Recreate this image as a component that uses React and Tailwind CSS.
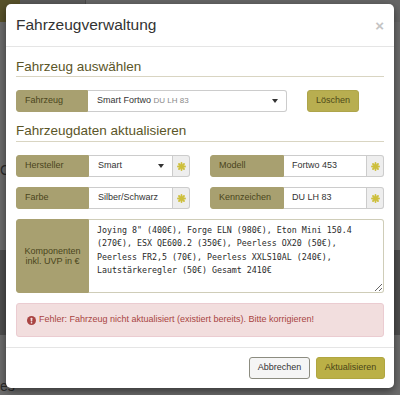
import React from "react";

const Star = () => (
  <svg width="9" height="9" viewBox="0 0 9 9">
    <g stroke="#cdbf3c" strokeWidth="1.8" strokeLinecap="round">
      <line x1="4.5" y1="1" x2="4.5" y2="8" />
      <line x1="1" y1="4.5" x2="8" y2="4.5" />
      <line x1="2" y1="2" x2="7" y2="7" />
      <line x1="7" y1="2" x2="2" y2="7" />
    </g>
  </svg>
);

const Caret = () => (
  <svg width="6" height="4" viewBox="0 0 6 4">
    <path d="M0 0h6L3 4z" fill="#333" />
  </svg>
);

const Field = ({ label, labelW, children }) => (
  <div className="flex h-[22px] flex-1">
    <div className={`${labelW} flex items-center rounded-l-[3px] border border-[#a8a070] bg-[#a8a070] pl-[8px] text-[#4a451c]`}>
      {label}
    </div>
    {children}
    <div className="flex w-[17px] items-center justify-center rounded-r-[3px] border border-l-0 border-[#cccccc] bg-[#eeeeee]">
      <Star />
    </div>
  </div>
);

export default function App() {
  return (
    <div className="relative h-[395px] w-[400px] overflow-hidden bg-[#6c6c6c] font-['Liberation_Sans',Arial,sans-serif]">
      {/* dimmed page behind */}
      <div className="flex h-[22px]">
        <div className="w-[20px] bg-[#58522a]" />
        <div className="flex w-[65px] items-center gap-[3px] bg-[#5a5a5a] pl-[4px] text-[9px] leading-[12px] text-[#2e2e2e]">
          <span>●</span>
          <span>Benutzer</span>
        </div>
        <div className="flex-1 border-l border-[#4a4a4a] bg-[#666666]" />
      </div>
      <div className="h-[140px]" />
      <div className="text-[14px] leading-[16px] text-[#2a2a2a]">C</div>
      <div className="h-[72px]" />
      <div className="h-[85px] bg-[#4e4e4e]" />
      <div className="h-[44px]" />
      <div className="text-[14px] leading-[14px] text-[#2a2a2a]">es</div>

      {/* modal */}
      <div className="absolute left-[6px] top-[4px] w-[388px] rounded-[5px] bg-white shadow-[0_3px_9px_rgba(0,0,0,0.5)]">
        <div className="flex h-[43px] items-center justify-between border-b border-[#e5e5e5] pl-[10px] pr-[10px]">
          <div className="text-[15.5px] leading-[18px] text-[#333333]">Fahrzeugverwaltung</div>
          <div className="text-[15px] font-bold leading-[15px] text-[#c4c4c4]">×</div>
        </div>

        <div className="px-[10px] pb-[10px] text-[9px]">
          <div className="mt-[11px] h-[19px] border-b border-[#d9d5c2] text-[13.5px] leading-[18px] text-[#5b5628]">
            Fahrzeug auswählen
          </div>

          <div className="mt-[13px] flex h-[22px] items-center">
            <div className="flex h-[22px] w-[271px]">
              <div className="flex w-[72px] items-center rounded-l-[3px] border border-[#a8a070] bg-[#a8a070] pl-[8px] text-[#4a451c]">
                Fahrzeug
              </div>
              <div className="flex flex-1 items-center justify-between rounded-r-[3px] border border-l-0 border-[#cccccc] bg-white pl-[9px] pr-[8px] text-[#333333]">
                <span>
                  Smart Fortwo <span className="text-[8px] text-[#8a8a8a]">DU LH 83</span>
                </span>
                <Caret />
              </div>
            </div>
            <div className="ml-[20px] flex h-[22px] w-[52px] items-center justify-center rounded-[3px] border border-[#aea54a] bg-[#b8ae50] text-[#4e4919]">
              Löschen
            </div>
          </div>

          <div className="mt-[10px] h-[20px] border-b border-[#d9d5c2] text-[13.5px] leading-[18px] text-[#5b5628]">
            Fahrzeugdaten aktualisieren
          </div>

          <div className="mt-[13px] flex gap-[20px]">
            <Field label="Hersteller" labelW="w-[73px]">
              <div className="flex flex-1 items-center justify-between border border-l-0 border-[#cccccc] bg-white pl-[9px] pr-[8px] text-[#333333]">
                <span>Smart</span>
                <Caret />
              </div>
            </Field>
            <Field label="Modell" labelW="w-[74px]">
              <div className="flex flex-1 items-center border border-l-0 border-[#cccccc] bg-white pl-[8px] text-[#333333]">
                Fortwo 453
              </div>
            </Field>
          </div>

          <div className="mt-[10px] flex gap-[20px]">
            <Field label="Farbe" labelW="w-[73px]">
              <div className="flex flex-1 items-center border border-l-0 border-[#cccccc] bg-white pl-[9px] text-[#333333]">
                Silber/Schwarz
              </div>
            </Field>
            <Field label="Kennzeichen" labelW="w-[74px]">
              <div className="flex flex-1 items-center border border-l-0 border-[#cccccc] bg-white pl-[8px] text-[#333333]">
                DU LH 83
              </div>
            </Field>
          </div>

          <div className="mt-[10px] flex h-[74px]">
            <div className="flex w-[73px] items-center justify-center rounded-l-[3px] border border-[#a8a070] bg-[#a8a070] text-center leading-[10px] text-[#4a451c]">
              Komponenten
              <br />
              inkl. UVP in €
            </div>
            <textarea
              readOnly
              className="flex-1 resize-y rounded-r-[3px] border border-l-0 border-[#cfcdb8] bg-white py-[4px] pl-[8px] pr-[12px] font-['DejaVu_Sans_Mono',monospace] text-[8.3px] leading-[13.4px] text-[#2a2a2a] outline-none"
              value={'Joying 8" (400€), Forge ELN (980€), Eton Mini 150.4 (270€), ESX QE600.2 (350€), Peerless OX20 (50€), Peerless FR2,5 (70€), Peerless XXLS10AL (240€), Lautstärkeregler (50€) Gesamt 2410€'}
            />
          </div>

          <div className="mt-[10px] flex h-[34px] items-center gap-[3px] rounded-[3px] border border-[#ebccd1] bg-[#f2dede] pl-[10px] text-[#a94442]">
            <svg width="9" height="9" viewBox="0 0 10 10">
              <circle cx="5" cy="5" r="5" fill="#a94442" />
              <rect x="4.1" y="2" width="1.8" height="4" rx="0.5" fill="#f2dede" />
              <rect x="4.1" y="6.8" width="1.8" height="1.6" rx="0.5" fill="#f2dede" />
            </svg>
            <span>Fehler: Fahrzeug nicht aktualisiert (existiert bereits). Bitte korrigieren!</span>
          </div>
        </div>

        <div className="flex justify-end gap-[6px] border-t border-[#e5e5e5] pb-[9px] pr-[9px] pt-[9px] text-[9px]">
          <div className="flex h-[22px] w-[61px] items-center justify-center rounded-[3px] border border-[#8c8c80] bg-[#f5f5f5] text-[#333333]">
            Abbrechen
          </div>
          <div className="flex h-[22px] w-[69px] items-center justify-center rounded-[3px] border border-[#b0a640] bg-[#bbb046] text-[#4a4518]">
            Aktualisieren
          </div>
        </div>
      </div>
    </div>
  );
}
